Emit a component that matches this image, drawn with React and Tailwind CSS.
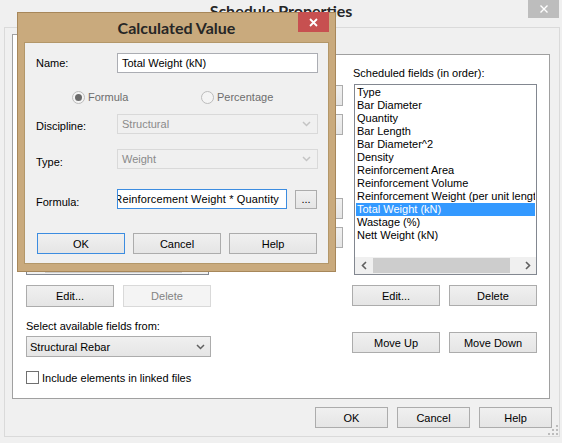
import React from "react";
import clsx from "clsx";

const Chevron = ({ color = "#606060" }) => (
  <svg width="9" height="6" viewBox="0 0 9 6">
    <polyline points="1,1 4.5,4.5 8,1" fill="none" stroke={color} strokeWidth="1.5" />
  </svg>
);

const Btn = ({ children, className, disabled, primary }) => (
  <div
    className={clsx(
      "flex items-center justify-center border",
      disabled
        ? "border-[#d9d9d9] bg-[#f4f4f4] text-[#838383]"
        : primary
        ? "border-[#3c8ce0] bg-linear-to-b from-[#f0f0f0] to-[#e5e5e5]"
        : "border-[#acacac] bg-linear-to-b from-[#f0f0f0] to-[#e5e5e5]",
      className
    )}
  >
    {children}
  </div>
);

const ListBox = ({ items, selected, className }) => (
  <div className={clsx("h-[191px] w-[183px] border border-[#828790] bg-white flex flex-col", className)}>
    <div className="flex-1 overflow-hidden px-[1px] pt-[1px]">
      {items.map((it, i) => (
        <div
          key={i}
          className={clsx(
            "h-[13px] leading-[13px] pl-[1px] whitespace-nowrap overflow-hidden",
            i === selected ? "bg-[#3399ff] text-white" : "text-black"
          )}
        >
          {it}
        </div>
      ))}
    </div>
    <div className="h-[17px] flex bg-[#f0f0f0]">
      <div className="w-[17px] flex items-center justify-center">
        <svg width="6" height="9" viewBox="0 0 6 9">
          <polyline points="5,1 1.5,4.5 5,8" fill="none" stroke="#606060" strokeWidth="1.6" />
        </svg>
      </div>
      <div className="ml-[1px] my-[1px] w-[137px] bg-[#cdcdcd]" />
      <div className="flex-1" />
      <div className="w-[17px] flex items-center justify-center">
        <svg width="6" height="9" viewBox="0 0 6 9">
          <polyline points="1,1 4.5,4.5 1,8" fill="none" stroke="#606060" strokeWidth="1.6" />
        </svg>
      </div>
    </div>
  </div>
);

const scheduled = [
  "Type",
  "Bar Diameter",
  "Quantity",
  "Bar Length",
  "Bar Diameter^2",
  "Density",
  "Reinforcement Area",
  "Reinforcement Volume",
  "Reinforcement Weight (per unit length)",
  "Total Weight (kN)",
  "Wastage (%)",
  "Nett Weight (kN)",
];

const available = [
  "Bar Diameter",
  "Bar Length",
  "Bar Number",
  "Comments",
  "Count",
  "Family and Type",
  "Hook At End",
  "Hook At Start",
  "Mark",
  "Partition",
  "Quantity",
  "Shape",
  "Total Bar Length",
];

const Radio = ({ label, checked, className }) => (
  <div className={clsx("flex items-center", className)}>
    <div className="w-[13px] h-[13px] rounded-full border border-[#bcbcbc] bg-[#f4f4f4] flex items-center justify-center">
      {checked && <div className="w-[7px] h-[7px] rounded-full bg-[#6a6a6a]" />}
    </div>
    <span className="ml-[3px] text-[#6d6d6d]">{label}</span>
  </div>
);

const DisabledSelect = ({ value }) => (
  <div className="w-[201px] h-[20px] border border-[#d9d9d9] flex items-center justify-between pl-[4px] pr-[6px] text-[#8a8a8a]">
    <span>{value}</span>
    <Chevron color="#c4c4c4" />
  </div>
);

const CalculatedValue = () => (
  <div className="absolute z-20 left-[17px] top-[12px] w-[319px] h-[260px] bg-[#c9aa7d] border border-[#a7875a] flex flex-col">
    <div className="h-[29px] grid grid-cols-[40px_1fr_40px]">
      <div />
      <div className="flex items-center justify-center font-['Lato',sans-serif] font-bold text-[16px] text-[#262626]">Calculated Value</div>
      <div>
        <div className="-mt-[1px] ml-[3px] w-[31px] h-[20px] bg-[#c75050] flex items-center justify-center">
          <svg width="9" height="9" viewBox="0 0 9 9">
            <path d="M1 1 L8 8 M8 1 L1 8" stroke="white" strokeWidth="1.8" />
          </svg>
        </div>
      </div>
    </div>
    <div className="mx-[6px] h-[222px] bg-[#f0f0f0] border border-[#b39769] pt-[10px] pl-[11px] flex flex-col">
      <div className="h-[20px] flex items-center">
        <div className="w-[81px]">Name:</div>
        <div className="w-[201px] h-[20px] border border-[#abadb3] bg-white flex items-center pl-[4px]">Total Weight (kN)</div>
      </div>
      <div className="mt-[14px] h-[20px] flex items-center">
        <Radio label="Formula" checked className="ml-[36px] w-[129px]" />
        <Radio label="Percentage" />
      </div>
      <div className="mt-[7px] h-[20px] flex items-center">
        <div className="w-[81px] pt-[4px]">Discipline:</div>
        <DisabledSelect value="Structural" />
      </div>
      <div className="mt-[15px] h-[20px] flex items-center">
        <div className="w-[81px] pt-[6px]">Type:</div>
        <DisabledSelect value="Weight" />
      </div>
      <div className="mt-[20px] h-[20px] flex items-center">
        <div className="w-[81px] pt-[6px]">Formula:</div>
        <div className="w-[170px] h-[20px] border border-[#3c8ce0] bg-white flex items-center justify-end overflow-hidden pr-[7px] whitespace-nowrap tracking-[0.15px]">
          Reinforcement Weight * Quantity
        </div>
        <Btn className="ml-[8px] w-[22px] h-[19px]">...</Btn>
      </div>
      <div className="mt-[24px] flex gap-[8px] ml-[1px]">
        <Btn primary className="w-[88px] h-[21px]">OK</Btn>
        <Btn className="w-[88px] h-[21px]">Cancel</Btn>
        <Btn className="w-[88px] h-[21px]">Help</Btn>
      </div>
    </div>
  </div>
);

export default function App() {
  return (
    <div className="w-[562px] h-[443px] bg-[#f0f0f0] relative overflow-hidden font-['Liberation_Sans',Arial,sans-serif] text-[11px] text-black leading-[16px]">
      <div className="h-[27px] grid grid-cols-[34px_1fr_34px]">
        <div />
        <div className="text-center font-['Lato',sans-serif] font-bold text-[16px] text-[#262626] pt-[3px]">Schedule Properties</div>
        <div>
          <div className="w-[31px] h-[18px] bg-[#bdbdbd] flex items-center justify-center">
            <svg width="8" height="8" viewBox="0 0 8 8">
              <path d="M0.5 0.5 L7.5 7.5 M7.5 0.5 L0.5 7.5" stroke="white" strokeWidth="1.4" />
            </svg>
          </div>
        </div>
      </div>

      <div className="ml-[4px] w-[556px] h-[410px] border border-[#dadada] flex flex-col">
        <div className="ml-[7px] mt-[6px] h-[20px] w-[300px] flex items-end">
          <div className="h-[21px] -mb-[1px] px-[6px] bg-white border border-b-0 border-[#a0a0a0] relative z-10 flex items-center">Fields</div>
          <div className="h-[19px] px-[5px] border border-b-0 border-l-0 border-[#acacac] flex items-center">Filter</div>
          <div className="h-[19px] px-[5px] border border-b-0 border-l-0 border-[#acacac] flex items-center">Sorting/Grouping</div>
          <div className="h-[19px] px-[5px] border border-b-0 border-l-0 border-[#acacac] flex items-center">Formatting</div>
          <div className="h-[19px] px-[5px] border border-b-0 border-l-0 border-[#acacac] flex items-center">Appearance</div>
        </div>

        <div className="ml-[7px] w-[538px] h-[345px] border border-[#a0a0a0] bg-white pt-[10px] pl-[13px] flex">
          <div className="w-[185px] flex flex-col">
            <div className="h-[16px]">Available fields:</div>
            <ListBox items={available} selected={-1} className="mt-[3px]" />
            <div className="mt-[10px] flex justify-between">
              <Btn className="w-[88px] h-[22px]">Edit...</Btn>
              <Btn disabled className="w-[88px] h-[22px]">Delete</Btn>
            </div>
            <div className="mt-[11px] h-[16px]">Select available fields from:</div>
            <div className="mt-[2px] h-[21px] border border-[#acacac] bg-linear-to-b from-[#f0f0f0] to-[#e5e5e5] flex items-center justify-between pl-[3px] pr-[5px]">
              <span>Structural Rebar</span>
              <Chevron />
            </div>
            <div className="mt-[12px] h-[17px] flex items-center">
              <div className="w-[13px] h-[13px] border border-[#707070] bg-white" />
              <span className="ml-[3px]">Include elements in linked files</span>
            </div>
          </div>

          <div className="ml-[11px] w-[121px] flex flex-col">
            <Btn className="mt-[20px] h-[21px]">Add --&gt;</Btn>
            <Btn className="mt-[8px] h-[21px]">&lt;-- Remove</Btn>
            <Btn className="mt-[63px] h-[21px]">Add Parameter...</Btn>
            <Btn className="mt-[8px] h-[21px]">Calculated Value...</Btn>
          </div>

          <div className="ml-[9px] w-[185px] flex flex-col">
            <div className="h-[16px] pl-[1px]">Scheduled fields (in order):</div>
            <ListBox items={scheduled} selected={9} className="mt-[3px] ml-[2px]" />
            <div className="mt-[10px] flex justify-between">
              <Btn className="w-[88px] h-[21px]">Edit...</Btn>
              <Btn className="w-[88px] h-[21px]">Delete</Btn>
            </div>
            <div className="mt-[26px] flex justify-between">
              <Btn className="w-[88px] h-[21px]">Move Up</Btn>
              <Btn className="w-[88px] h-[21px]">Move Down</Btn>
            </div>
          </div>
        </div>

        <div className="mt-[8px] mr-[7px] flex justify-end gap-[9px]">
          <Btn className="w-[73px] h-[21px]">OK</Btn>
          <Btn className="w-[73px] h-[21px]">Cancel</Btn>
          <Btn className="w-[73px] h-[21px]">Help</Btn>
        </div>
      </div>

      <svg className="absolute right-[4px] bottom-[8px]" width="10" height="10" viewBox="0 0 10 10">
        <rect x="8" y="0" width="2" height="2" fill="#bcbcbc" />
        <rect x="4" y="4" width="2" height="2" fill="#bcbcbc" />
        <rect x="8" y="4" width="2" height="2" fill="#bcbcbc" />
        <rect x="0" y="8" width="2" height="2" fill="#bcbcbc" />
        <rect x="4" y="8" width="2" height="2" fill="#bcbcbc" />
        <rect x="8" y="8" width="2" height="2" fill="#bcbcbc" />
      </svg>

      <CalculatedValue />
    </div>
  );
}
